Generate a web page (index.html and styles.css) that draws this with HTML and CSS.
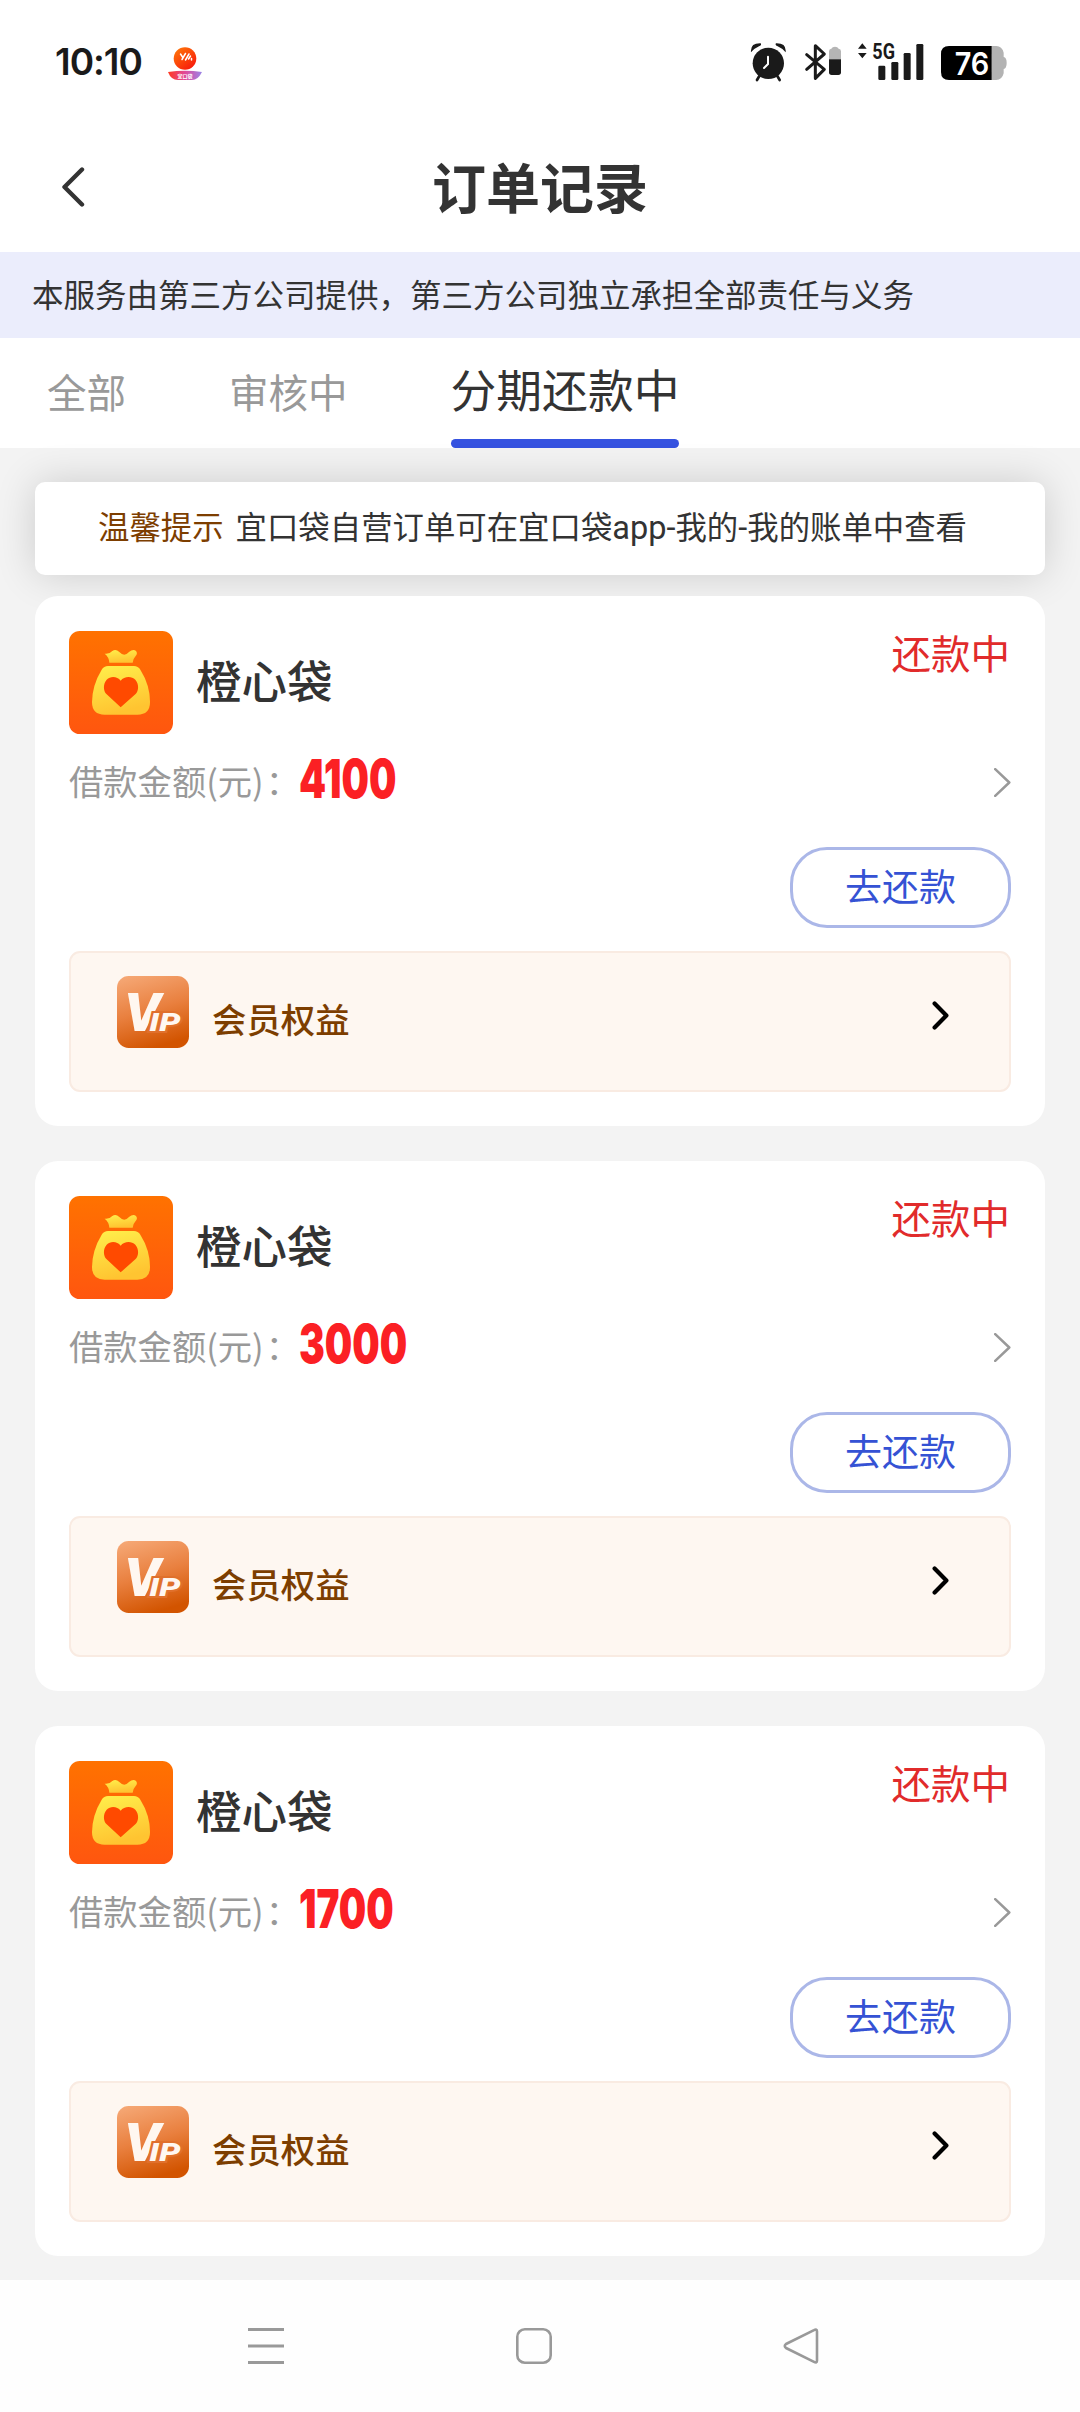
FILE: index.html
```html
<!DOCTYPE html>
<html lang="zh-CN">
<head>
<meta charset="utf-8">
<title>订单记录</title>
<link rel="stylesheet" href="styles.css">
</head>
<body>
<svg class="defs" aria-hidden="true">
  <defs>
    <linearGradient id="orange" x1="0" y1="0" x2="0" y2="1"><stop offset="0" stop-color="#ff7200"/><stop offset="1" stop-color="#ff560f"/></linearGradient>
    <linearGradient id="gold" x1="0" y1="0" x2="0.3" y2="1"><stop offset="0" stop-color="#fff04c"/><stop offset="1" stop-color="#ffc431"/></linearGradient>
    <linearGradient id="copper" x1="0.2" y1="0" x2="0.5" y2="1"><stop offset="0" stop-color="#f5a673"/><stop offset="0.5" stop-color="#e9803f"/><stop offset="1" stop-color="#d25400"/></linearGradient>
    <linearGradient id="ball" x1="0" y1="0" x2="0.8" y2="1"><stop offset="0" stop-color="#ff7d08"/><stop offset="1" stop-color="#f8170c"/></linearGradient>
    <linearGradient id="ribbon"><stop offset="0" stop-color="#ff3a20"/><stop offset="0.5" stop-color="#e0489a"/><stop offset="1" stop-color="#9a86e8"/></linearGradient>
  </defs>
  <symbol id="bag" viewBox="0 0 312 309">
    <rect width="312" height="309" rx="32" fill="url(#orange)"/>
    <path d="M107 68Q121 70 130 60Q140 52 151 63Q166 79 180 63Q193 52 201 60Q207 68 200 75Q193 82 191 95H121Q120 78 107 68Z" fill="url(#gold)"/>
    <path d="M117 105H195Q207 105 214 116Q243 162 243 213Q243 251 205 251H107Q69 251 69 213Q70 162 98 116Q105 105 117 105Z" fill="url(#gold)"/>
    <path d="M155 229L113 190C102 179 102 158 113 146C125 134 145 136 155 149C165 136 187 134 199 146C210 158 210 179 199 190Z" fill="#ff4a00"/>
  </symbol>
  <symbol id="next-thin" viewBox="0 0 17 29"><path d="M1.2 1.2L15.3 14.5L1.2 27.8" fill="none" stroke="#999" stroke-width="2.5" stroke-linecap="round" stroke-linejoin="round"/></symbol>
  <symbol id="next-bold" viewBox="0 0 17 29"><path d="M2.6 2.6L14.4 14.5L2.6 26.4" fill="none" stroke="#000" stroke-width="4.2" stroke-linecap="round" stroke-linejoin="round"/></symbol>
</svg>

<div class="status-bar">
  <span class="time">10:10</span>
  <svg class="app-mark" viewBox="0 0 36 36">
    <circle cx="18" cy="13.5" r="11.3" fill="url(#ball)"/>
    <path d="M13.5 9L15.5 12M15 14.500L18.500 8.500M18.500 15L22 9M21.500 14L23.500 11M24.500 13.500V15" fill="none" stroke="#fff" stroke-width="1.500" stroke-linecap="round"/>
    <path d="M1 27Q18 24.500 35 27Q31 35 25 35H11Q4 35 1 27Z" fill="url(#ribbon)"/>
    <text x="18" y="33" class="mark-text">宜口袋</text>
  </svg>
  <div class="indicators">
    <svg width="40" height="43" viewBox="60 60 120 129">
      <circle cx="118" cy="130" r="47" fill="#1a1a1a"/>
      <path d="M66 97Q63 69 95 70Q99 76 90 79Q76 85 66 97ZM170 97Q173 69 141 70Q137 76 146 79Q160 85 170 97Z" fill="#1a1a1a"/>
      <path d="M91 168L84 180M145 168L152 180" stroke="#1a1a1a" stroke-width="8" stroke-linecap="round"/>
      <path d="M117 110V132L105 144" fill="none" stroke="#fff" stroke-width="6" stroke-linecap="round"/>
    </svg>
    <svg width="38" height="43" viewBox="225 60 114 129">
      <path d="M233 104L286 148L259 175V77L286 102L233 148" fill="none" stroke="#1a1a1a" stroke-width="9" stroke-linejoin="round" stroke-linecap="round"/>
      <path d="M300 118V94Q300 87 307 86Q310 80 318 80Q326 80 329 86Q336 87 336 94V118Z" fill="#b5b5b5"/>
      <path d="M300 118H336V157Q336 165 328 165H308Q300 165 300 157Z" fill="#1a1a1a"/>
    </svg>
    <svg width="70" height="43" viewBox="380 60 210 129">
      <path d="M399 70L412 86H386ZM399 115L412 99H386Z" fill="#1a1a1a"/>
      <text x="429" y="116" class="net" textLength="68" lengthAdjust="spacingAndGlyphs">5G</text>
      <g fill="#1a1a1a"><rect x="447" y="137" width="21" height="43" rx="4"/><rect x="486" y="126" width="21" height="54" rx="4"/><rect x="523" y="99" width="21" height="81" rx="4"/><rect x="561" y="72" width="21" height="108" rx="4"/></g>
    </svg>
    <svg width="70" height="43" viewBox="628 60 210 129">
      <path d="M786 78H800Q817 78 822 98V111Q831 112 831 129Q831 146 822 147V160Q817 180 800 180H786Z" fill="#b3b3b3"/>
      <path d="M658 78H786V180H658Q634 180 634 156V102Q634 78 658 78Z" fill="#000"/>
      <text x="675" y="164" class="charge" textLength="104" lengthAdjust="spacingAndGlyphs">76</text>
    </svg>
  </div>
</div>

<header class="title-bar">
  <svg class="back" viewBox="0 0 24 42"><path d="M21 3.500L3.500 21L21 38.500" fill="none" stroke="#333" stroke-width="4.400" stroke-linecap="round" stroke-linejoin="round"/></svg>
  <h1 class="title">订单记录</h1>
</header>

<div class="notice">本服务由第三方公司提供，第三方公司独立承担全部责任与义务</div>

<nav class="tabs">
  <a class="tab">全部</a>
  <a class="tab">审核中</a>
  <a class="tab tab-active">分期还款中</a>
</nav>

<main class="content">
  <div class="tip"><span class="tip-label">温馨提示</span><span class="tip-text">宜口袋自营订单可在宜口袋<span class="latin">app-</span>我的<span class="latin">-</span>我的账单中查看</span></div>

  <section class="card">
    <div class="card-head">
      <svg class="logo"><use href="#bag"/></svg>
      <h2 class="name">橙心袋</h2>
      <span class="state">还款中</span>
    </div>
    <div class="amount-row">
      <span class="label">借款金额(元)<span class="colon">：</span></span>
      <span class="amount">4100</span>
      <svg class="arrow"><use href="#next-thin"/></svg>
    </div>
    <button class="repay">去还款</button>
    <div class="benefit">
      <svg class="vip" viewBox="0 0 216 216">
        <rect width="216" height="216" rx="35" fill="url(#copper)"/>
        <text x="22" y="165" class="vip-v" textLength="108" lengthAdjust="spacingAndGlyphs">V</text>
        <text x="97" y="165" class="vip-ip" textLength="93" lengthAdjust="spacingAndGlyphs">IP</text>
      </svg>
      <span class="benefit-name">会员权益</span>
      <svg class="benefit-arrow"><use href="#next-bold"/></svg>
    </div>
  </section>

  <section class="card">
    <div class="card-head">
      <svg class="logo"><use href="#bag"/></svg>
      <h2 class="name">橙心袋</h2>
      <span class="state">还款中</span>
    </div>
    <div class="amount-row">
      <span class="label">借款金额(元)<span class="colon">：</span></span>
      <span class="amount">3000</span>
      <svg class="arrow"><use href="#next-thin"/></svg>
    </div>
    <button class="repay">去还款</button>
    <div class="benefit">
      <svg class="vip" viewBox="0 0 216 216">
        <rect width="216" height="216" rx="35" fill="url(#copper)"/>
        <text x="22" y="165" class="vip-v" textLength="108" lengthAdjust="spacingAndGlyphs">V</text>
        <text x="97" y="165" class="vip-ip" textLength="93" lengthAdjust="spacingAndGlyphs">IP</text>
      </svg>
      <span class="benefit-name">会员权益</span>
      <svg class="benefit-arrow"><use href="#next-bold"/></svg>
    </div>
  </section>

  <section class="card">
    <div class="card-head">
      <svg class="logo"><use href="#bag"/></svg>
      <h2 class="name">橙心袋</h2>
      <span class="state">还款中</span>
    </div>
    <div class="amount-row">
      <span class="label">借款金额(元)<span class="colon">：</span></span>
      <span class="amount">1700</span>
      <svg class="arrow"><use href="#next-thin"/></svg>
    </div>
    <button class="repay">去还款</button>
    <div class="benefit">
      <svg class="vip" viewBox="0 0 216 216">
        <rect width="216" height="216" rx="35" fill="url(#copper)"/>
        <text x="22" y="165" class="vip-v" textLength="108" lengthAdjust="spacingAndGlyphs">V</text>
        <text x="97" y="165" class="vip-ip" textLength="93" lengthAdjust="spacingAndGlyphs">IP</text>
      </svg>
      <span class="benefit-name">会员权益</span>
      <svg class="benefit-arrow"><use href="#next-bold"/></svg>
    </div>
  </section>
</main>

<footer class="system-nav">
  <svg width="36" height="36" viewBox="0 0 36 36"><path d="M0 1.500H36M0 18H36M0 34.500H36" stroke="#999" stroke-width="3"/></svg>
  <svg width="36" height="36" viewBox="0 0 36 36"><rect x="1.300" y="1.300" width="33.400" height="33.400" rx="7.500" fill="none" stroke="#999" stroke-width="2.600"/></svg>
  <svg width="36" height="36" viewBox="0 0 36 36"><path d="M31 2.200Q34 0.500 34 3.500V32.500Q34 35.500 31 33.800L3 20Q0.500 18 3 16Z" fill="none" stroke="#999" stroke-width="2.600" stroke-linejoin="round"/></svg>
</footer>
</body>
</html>
```
FILE: styles.css
```css
* { box-sizing: border-box; }
body {
  margin: 0;
  width: 1080px;
  height: 2412px;
  display: flex;
  flex-direction: column;
  overflow: hidden;
  background: #fff;
  color: #333;
  font-family: "Noto Sans CJK SC", "Noto Sans", sans-serif;
}
svg { display: block; flex: none; }
.defs { position: absolute; width: 0; height: 0; }

.status-bar {
  height: 124px;
  flex: none;
  display: flex;
  align-items: center;
  padding: 0 74px 0 55px;
}
.time {
  font: 600 37px/40px Inter, sans-serif;
  letter-spacing: -1px;
  width: 112px;
  color: #1a1a1a;
}
.app-mark { width: 36px; height: 36px; margin-top: 2px; }
.mark-text { font-size: 5px; font-weight: 700; fill: #fff; text-anchor: middle; }
.indicators { display: flex; margin-left: auto; margin-right: -3px; margin-top: -1px; }
.indicators svg + svg { margin-left: 15px; }
.indicators svg + svg + svg { margin-left: 14px; }
.indicators svg:last-child { margin-left: 13px; }
.net { font: 700 66px Roboto, sans-serif; fill: #1a1a1a; }
.charge { font: 600 93px Inter, sans-serif; fill: #fff; }

.title-bar {
  height: 128px;
  flex: none;
  display: grid;
  grid-template-columns: 61px 1fr 61px;
  align-items: start;
}
.back { grid-column: 2; grid-row: 1; width: 24px; height: 42px; margin-top: 42px; }
.title {
  grid-column: 2;
  grid-row: 1;
  margin: 34px 0 0;
  text-align: center;
  font-size: 54px;
  line-height: 56px;
  font-weight: 700;
}

.notice {
  height: 86px;
  flex: none;
  padding: 0 32px;
  background: #ebedfc;
  font-size: 31.5px;
  line-height: 83px;
  white-space: nowrap;
}

.tabs {
  height: 110px;
  flex: none;
  display: flex;
  gap: 103px;
  padding-left: 47px;
}
.tab { font-size: 39.5px; line-height: 105px; color: #999; }
.tab-active { font-size: 45.8px; line-height: 101px; color: #333; }
.tab-active::after {
  content: "";
  display: block;
  height: 9px;
  border-radius: 4.5px;
  background: #3552e0;
}

.content {
  height: 1832px;
  flex: none;
  padding: 34px 35px 0;
  background: #f3f3f3;
}
.tip {
  height: 93px;
  margin-bottom: 21px;
  padding-left: 63px;
  border-radius: 10px;
  background: #fff;
  box-shadow: 0 0 40px rgba(0, 0, 0, 0.16);
  font-size: 31.4px;
  line-height: 88px;
  white-space: nowrap;
}
.tip-label { margin-right: 12px; color: #7d3e00; }
.latin { font-family: Roboto, sans-serif; font-size: 32.5px; }

.card {
  position: relative;
  height: 530px;
  margin-bottom: 35px;
  padding: 35px 34px 34px;
  border-radius: 23px;
  background: #fff;
}
.card-head { display: flex; height: 103px; }
.logo { width: 104px; height: 103px; }
.name { margin: 0 0 0 23px; font-size: 45.5px; line-height: 96px; font-weight: 500; }
.state { margin: 0 1px 0 auto; font-size: 39.5px; line-height: 41px; color: #e12b2b; }
.amount-row { display: flex; align-items: center; height: 97px; }
.label { width: 230px; padding-bottom: 6px; font-size: 34.3px; line-height: 40px; color: #999; white-space: nowrap; }
.colon { margin-left: 2px; }
.amount {
  padding-bottom: 8px;
  font: 900 54px/60px Inter, sans-serif;
  color: #fb2024;
  transform: scaleX(0.715);
  transform-origin: left;
}
.arrow { width: 17px; height: 29px; margin-left: auto; }
.repay {
  display: block;
  width: 221px;
  height: 81px;
  margin: 16px 0 23px auto;
  padding: 0 0 6px;
  border: 3px solid #abb7e8;
  border-radius: 37px;
  background: #fff;
  font-family: inherit;
  font-size: 37px;
  color: #3552d4;
}
.benefit {
  height: 141px;
  display: flex;
  align-items: flex-start;
  padding: 23px 60px 0 46px;
  border: 2px solid #f9ebe2;
  border-radius: 11px;
  background: #fef7f1;
}
.vip { width: 72px; height: 72px; }
.vip-v { font: italic 900 162px Roboto, sans-serif; fill: #fff7f0; }
.vip-ip {
  font: italic 900 79px Roboto, sans-serif;
  fill: #fff7f0;
  stroke: #e0702c;
  stroke-width: 12px;
  paint-order: stroke;
}
.benefit-name { margin-left: 23px; font-size: 34.4px; line-height: 84px; font-weight: 500; color: #7d3e00; }
.benefit-arrow { width: 17px; height: 29px; margin: 25px 0 0 auto; }

.system-nav {
  height: 132px;
  flex: none;
  display: flex;
  align-items: flex-start;
  gap: 231.5px;
  padding: 48px 0 0 248px;
  background: #fefefe;
}
```
